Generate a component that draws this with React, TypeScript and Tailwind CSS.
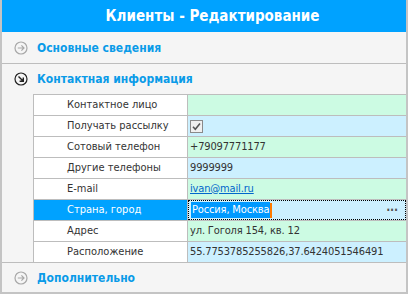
import React from "react"

type Row = {
  label: string
  value?: React.ReactNode
  tone: "green" | "blue"
  selected?: boolean
}

const font = { fontFamily: '"DejaVu Sans Condensed", "DejaVu Sans", sans-serif' }

function CircleArrow({ open }: { open?: boolean }) {
  const c = open ? "#222222" : "#a8a8a8"
  return (
    <svg width="14" height="14" viewBox="0 0 14 14" className="shrink-0">
      <circle cx="7" cy="7" r="6" fill="none" stroke={c} strokeWidth="1.2" />
      {open ? (
        <path d="M4.5 4.5 L9.3 9.3 M9.3 5.6 L9.3 9.3 L5.6 9.3" fill="none" stroke={c} strokeWidth="1.4" />
      ) : (
        <path d="M3.8 7 H10 M7.4 4.4 L10 7 L7.4 9.6" fill="none" stroke={c} strokeWidth="1.2" />
      )}
    </svg>
  )
}

function Section({ title, open, h }: { title: string; open?: boolean; h: string }) {
  return (
    <div className={"flex shrink-0 items-center gap-[9px] pl-[12px] " + h}>
      <CircleArrow open={open} />
      <span className="text-[12px] font-bold text-[#0a9be8]">{title}</span>
    </div>
  )
}

function Check() {
  return (
    <span className="flex h-[13px] w-[13px] items-center justify-center border border-[#8a8a8a] bg-[#f0f0f0]">
      <svg width="11" height="11" viewBox="0 0 11 11">
        <path d="M2 5.8 L4.3 8.2 L9 2.6" fill="none" stroke="#555" strokeWidth="1.6" />
      </svg>
    </span>
  )
}

const rows: Row[] = [
  { label: "Контактное лицо", tone: "green" },
  { label: "Получать рассылку", tone: "blue", value: <Check /> },
  { label: "Сотовый телефон", tone: "green", value: "+79097771177" },
  { label: "Другие телефоны", tone: "blue", value: "9999999" },
  {
    label: "E-mail",
    tone: "green",
    value: <span className="text-[#0066cc] underline">ivan@mail.ru</span>,
  },
  {
    label: "Страна, город",
    tone: "blue",
    selected: true,
    value: (
      <div className="flex w-full items-center">
        <span className="bg-[#0099ff] px-[1px] text-white">Россия, Москва</span>
        <span className="h-[15px] w-[2px] bg-[#ff7a00]" />
        <span className="ml-auto pr-[7px] text-[12px] font-bold leading-none text-[#555]">···</span>
      </div>
    ),
  },
  { label: "Адрес", tone: "green", value: "ул. Гоголя 154, кв. 12" },
  { label: "Расположение", tone: "blue", value: "55.7753785255826,37.6424051546491" },
]

export default function App() {
  return (
    <div
      className="flex h-[294px] w-[408px] flex-col border-x-2 border-b-2 border-[#c4c4c4] bg-[#f5f5f5] text-[11px] text-[#333]"
      style={font}
    >
      <div className="flex h-[32px] shrink-0 items-center justify-center bg-[#00a2ff] pl-[17px] text-[15px] font-bold text-white">
        Клиенты - Редактирование
      </div>

      <Section title="Основные сведения" h="h-[31px]" />
      <div className="h-px shrink-0 bg-[#bdbdbd]" />
      <Section title="Контактная информация" open h="h-[30px]" />

      <div className="ml-[31px] shrink-0 border-l border-t border-[#bdbdbd]">
        {rows.map((r, i) => (
          <div
            key={r.label}
            className={
              "flex " + (i < rows.length - 1 ? "h-[21px] border-b border-[#bdbdbd]" : "h-[20px]")
            }
          >
            <div
              className={
                "flex w-[154px] items-center border-r border-[#bdbdbd] pl-[33px] " +
                (r.selected ? "bg-[#00a2ff] text-white" : "bg-white text-[#333]")
              }
            >
              {r.label}
            </div>
            <div
              className={
                "flex flex-1 items-center pl-[2px] tracking-[-0.15px] " +
                (r.tone === "green" ? "bg-[#ccfbe3] " : "bg-[#ccf0ff] ") +
                (r.selected ? "border border-dotted border-black" : "")
              }
            >
              {r.value}
            </div>
          </div>
        ))}
      </div>
      <div className="h-px shrink-0 bg-[#bdbdbd]" />

      <Section title="Дополнительно" h="h-[29px]" />
    </div>
  )
}
